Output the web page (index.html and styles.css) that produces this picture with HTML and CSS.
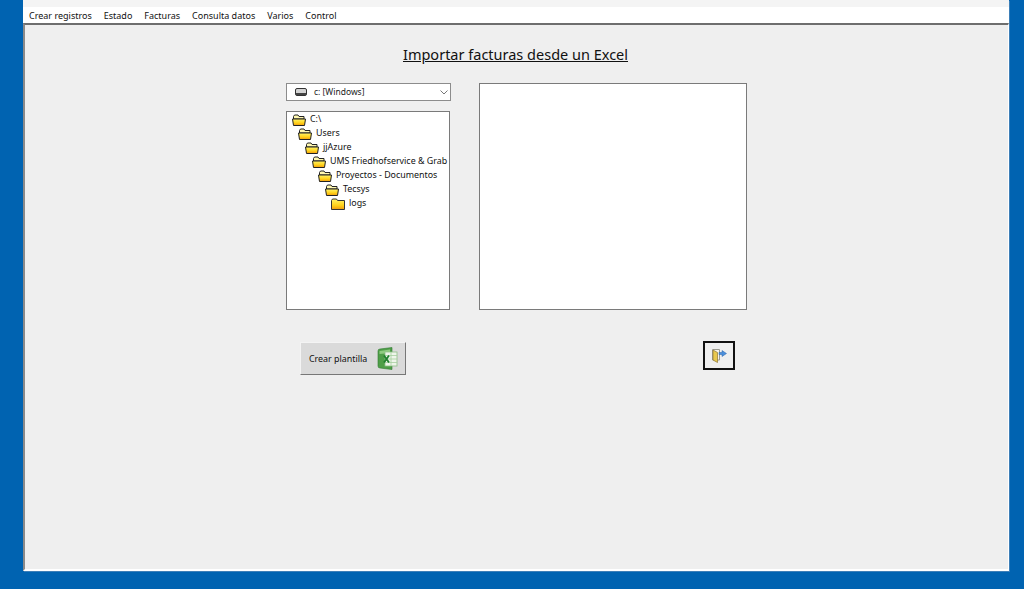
FILE: index.html
```html
<!DOCTYPE html>
<html lang="es">
<head>
  <meta charset="UTF-8">
  <title>Importar facturas desde un Excel</title>
  <link rel="stylesheet" href="styles.css">
</head>
<body>

  <div class="window">
    <div class="title-strip"></div>

    <nav class="menu">
      <span>Crear registros</span>
      <span>Estado</span>
      <span>Facturas</span>
      <span>Consulta datos</span>
      <span>Varios</span>
      <span>Control</span>
    </nav>

    <main class="client">
      <h1 class="title">Importar facturas desde un Excel</h1>

      <div class="form">
        <div class="panels">
          <div class="left-col">
            <div class="drive-select">
              <svg class="drive-icon" width="12" height="8" viewBox="0 0 12 8">
                <rect x="0.5" y="0.5" width="11" height="7" rx="1.5" fill="#d4d4d4" stroke="#333"/>
                <rect x="1" y="5" width="10" height="2" fill="#444"/>
              </svg>
              <span class="drive-label">c: [Windows]</span>
              <svg class="chevron" width="8" height="5" viewBox="0 0 8 5">
                <path d="M0.5 0.5 L4 4 L7.500 0.5" fill="none" stroke="#777"/>
              </svg>
            </div>

            <div class="tree">
              <div class="tree-row depth-0"><svg class="folder" width="14" height="12" viewBox="0 0 14 12"><use href="#folder-open"/></svg>C:\</div>
              <div class="tree-row depth-1"><svg class="folder" width="14" height="12" viewBox="0 0 14 12"><use href="#folder-open"/></svg>Users</div>
              <div class="tree-row depth-2"><svg class="folder" width="14" height="12" viewBox="0 0 14 12"><use href="#folder-open"/></svg>jjAzure</div>
              <div class="tree-row depth-3"><svg class="folder" width="14" height="12" viewBox="0 0 14 12"><use href="#folder-open"/></svg>UMS Friedhofservice &amp; Grab</div>
              <div class="tree-row depth-4"><svg class="folder" width="14" height="12" viewBox="0 0 14 12"><use href="#folder-open"/></svg>Proyectos - Documentos</div>
              <div class="tree-row depth-5"><svg class="folder" width="14" height="12" viewBox="0 0 14 12"><use href="#folder-open"/></svg>Tecsys</div>
              <div class="tree-row depth-6"><svg class="folder" width="14" height="12" viewBox="0 0 14 12"><use href="#folder-closed"/></svg>logs</div>
            </div>
          </div>

          <div class="file-list"></div>
        </div>

        <div class="actions">
          <button class="btn-template">
            <span>Crear plantilla</span>
            <svg width="21" height="23" viewBox="0 0 21 23">
              <path d="M1 4 Q1 2 3 2 L15 0.500 L15 22.500 L3 21 Q1 21 1 19 Z" fill="#4f9e48" stroke="#2f7a30" stroke-width="0.6"/>
              <path d="M2.500 4 L13 2.500 V6 L2.500 7 Z" fill="#8fcb80"/>
              <rect x="8" y="5" width="12" height="14" fill="#eef5ea" stroke="#8fbf88" stroke-width="0.8"/>
              <path d="M8 8.500 H20 M8 12 H20 M8 15.500 H20 M14 5 V19" stroke="#a6cfa0" stroke-width="0.8"/>
              <path d="M7 8.500 L12 15.500 M12 8.500 L7 15.500" stroke="#1f7f2c" stroke-width="1.800"/>
            </svg>
          </button>

          <button class="btn-exit">
            <svg width="15" height="15" viewBox="0 0 15 15">
              <path d="M0.500 1.500 H7.500 V12 H0.500 Z" fill="#f6f3ea" stroke="#9a9a90"/>
              <path d="M1 2 L5.500 4.500 V14.500 L1 12 Z" fill="#e8c84e" stroke="#8c7430" stroke-width="0.7"/>
              <path d="M7 4.500 H10 V2.500 L14.500 5.500 L10 8.500 V6.500 H7 Z" fill="#4a8fdc" stroke="#2a62a8" stroke-width="0.5"/>
            </svg>
          </button>
        </div>
      </div>
    </main>
  </div>

  <svg class="defs" width="0" height="0">
    <defs>
      <linearGradient id="folder-fill" x1="0" y1="0" x2="0" y2="1">
        <stop offset="0" stop-color="#fff36a"/>
        <stop offset="0.6" stop-color="#ffd21a"/>
        <stop offset="1" stop-color="#f09a10"/>
      </linearGradient>
      <symbol id="folder-open" viewBox="0 0 14 12">
        <path d="M1.500 2.500 L2.500 1 H6 L7 2.500 H12 V5 H1.500 Z" fill="#fff8b0" stroke="#222"/>
        <path d="M0.500 5 H13.500 L12.500 11.500 H1.500 Z" fill="url(#folder-fill)" stroke="#222"/>
      </symbol>
      <symbol id="folder-closed" viewBox="0 0 14 12">
        <path d="M0.500 2.500 L1.500 1 H5.500 L6.500 2.500 H13.500 V11.500 H0.500 Z" fill="url(#folder-fill)" stroke="#333"/>
      </symbol>
    </defs>
  </svg>

</body>
</html>
```

FILE: styles.css
```css
html, body {
  height: 100%;
}

body {
  margin: 0;
  background-color: #0063b1;
  font-family: "Noto Sans", "Open Sans", sans-serif;
  color: #000;
  overflow: hidden;
}

.window {
  margin-left: 23px;
  width: 986px;
  height: 571px;
  display: flex;
  flex-direction: column;
  box-shadow: 1px 1px 0 #3d7fb8;
}

.title-strip {
  height: 7px;
  background-color: #f4f4f4;
}

.menu {
  height: 16px;
  padding-left: 6px;
  display: flex;
  align-items: center;
  gap: 12px;
  background-color: #fff;
  font-size: 9px;
  color: #111;
}

.client {
  flex: 1;
  background-color: #efefef;
  border-top: 2px solid #6e6e6e;
  border-left: 2px solid #8a8a8a;
  border-right: 1px solid #fff;
  border-bottom: 2px solid #fff;
  display: flex;
  flex-direction: column;
  align-items: center;
}

.title {
  margin: 19px 2px 19px 0;
  font-size: 14.500px;
  line-height: 20px;
  font-weight: 400;
  text-decoration: underline;
  color: #111;
}

.form {
  width: 461px;
}

.panels {
  display: flex;
  gap: 28px;
}

.left-col {
  width: 165px;
  display: flex;
  flex-direction: column;
  gap: 10px;
}

.drive-select {
  height: 16px;
  border: 1px solid #8c8c8c;
  background-color: #fff;
  display: flex;
  align-items: center;
  padding: 0 2px 0 8px;
  font-size: 8.500px;
  color: #222;
}

.drive-label {
  flex: 1;
  margin-left: 7px;
  padding-bottom: 2px;
}

.tree {
  height: 197px;
  width: 162px;
  border: 1px solid #7a7a7a;
  background-color: #fff;
  overflow: hidden;
  font-size: 8.900px;
  color: #111;
}

.tree-row {
  box-sizing: border-box;
  height: 14px;
  padding-bottom: 2px;
  display: flex;
  align-items: center;
  white-space: nowrap;
}

.folder {
  margin: 4px 4px 0 0;
  flex: none;
}

.depth-0 { padding-left: 5px; }
.depth-1 { padding-left: 11px; }
.depth-2 { padding-left: 18px; }
.depth-3 { padding-left: 25px; }
.depth-4 { padding-left: 31px; }
.depth-5 { padding-left: 38px; }
.depth-6 { padding-left: 44px; }

.file-list {
  width: 266px;
  height: 225px;
  border: 1px solid #7a7a7a;
  background-color: #fff;
}

.actions {
  margin-top: 31px;
  padding: 0 12px 0 14px;
  display: flex;
  justify-content: space-between;
  align-items: flex-start;
}

.btn-template {
  width: 106px;
  height: 33px;
  margin-top: 1px;
  padding: 0 7px 0 8px;
  display: flex;
  align-items: center;
  justify-content: space-between;
  background-color: #dadada;
  border: 1px solid;
  border-color: #f4f4f4 #777 #777 #f4f4f4;
  font-family: inherit;
  font-size: 8.900px;
  color: #111;
}

.btn-exit {
  width: 32px;
  height: 29px;
  padding: 0;
  display: flex;
  align-items: center;
  justify-content: center;
  background-color: #efefef;
  border: 2px solid #111;
}

.defs {
  position: absolute;
}
```
